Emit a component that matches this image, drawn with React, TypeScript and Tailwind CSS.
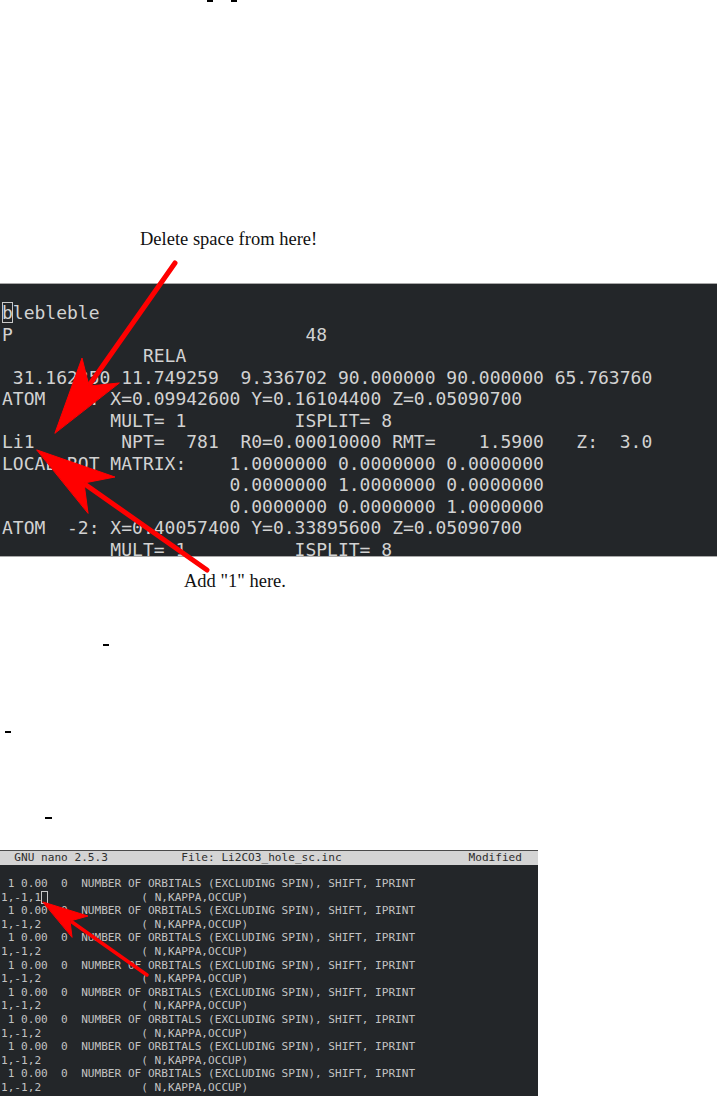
import React from "react";

const mono = { fontFamily: '"DejaVu Sans Mono", "Liberation Mono", monospace' };
const serif = { fontFamily: '"Liberation Serif", "DejaVu Serif", serif' };

const structLines = [
  "P" + " ".repeat(27) + "48",
  " ".repeat(13) + "RELA",
  " 31.162350 11.749259  9.336702 90.000000 90.000000 65.763760",
  "ATOM  -1: X=0.09942600 Y=0.16104400 Z=0.05090700",
  "          MULT= 1          ISPLIT= 8",
  "Li1        NPT=  781  R0=0.00010000 RMT=    1.5900   Z:  3.0",
  "LOCAL ROT MATRIX:    1.0000000 0.0000000 0.0000000",
  "                     0.0000000 1.0000000 0.0000000",
  "                     0.0000000 0.0000000 1.0000000",
  "ATOM  -2: X=0.40057400 Y=0.33895600 Z=0.05090700",
  "          MULT= 1          ISPLIT= 8",
];

const orbitalLine = " 1 0.00  0  NUMBER OF ORBITALS (EXCLUDING SPIN), SHIFT, IPRINT";
const kappaTail = " ".repeat(15) + "( N,KAPPA,OCCUP)";

const nanoHeader =
  "  GNU nano 2.5.3".padEnd(27, " ") +
  "File: Li2CO3_hole_sc.inc".padEnd(43, " ") +
  "Modified";

// red annotation arrows drawn over both screenshots
const Arrows = () => (
  <svg
    className="absolute inset-0 pointer-events-none"
    width={717}
    height={1096}
    viewBox="0 0 717 1096"
  >
    <g fill="#ff0000" stroke="#ff0000" strokeLinecap="round">
      <line x1={175} y1={263} x2={90} y2={384} strokeWidth={5} />
      <polygon points="55,433 82,358 89,386 119,383" strokeWidth={1} />

      <line x1={207} y1={570} x2={86} y2={485} strokeWidth={5} />
      <polygon points="37,450 115,477 84,483 88,513" strokeWidth={1} />

      <line x1={147} y1={975} x2={72} y2={922} strokeWidth={3.5} />
      <polygon points="43,902 88,916 70,921 72,937" strokeWidth={1} />
    </g>
  </svg>
);

export default function App() {
  return (
    <div className="relative w-[717px] h-[1096px] bg-white overflow-hidden flex flex-col">
      {/* clipped text remnants at the very top */}
      <div className="flex h-[2px]">
        <div className="ml-[207px] w-[6px] h-[2px] bg-black" />
        <div className="ml-[18px] w-[6px] h-[2px] bg-black" />
      </div>

      <div
        className="mt-[227px] h-[21px] pl-[140px] text-[18.5px] leading-[21px] text-[#111]"
        style={serif}
      >
        Delete space from here!
      </div>

      {/* struct file terminal */}
      <div
        className="mt-[33px] h-[274px] w-full overflow-hidden bg-[#232629] border-y border-[#a8a8a8] pt-[18px] pl-[2px] text-[18px] leading-[21.5px] text-[#d2d2d2] whitespace-pre"
        style={mono}
      >
        <div>
          <span className="outline outline-1 -outline-offset-1 outline-[#c8c8c8]">b</span>
          lebleble
        </div>
        {structLines.map((line, i) => (
          <div key={i}>{line}</div>
        ))}
      </div>

      <div
        className="mt-[14px] h-[21px] pl-[184px] text-[18.5px] leading-[21px] text-[#111]"
        style={serif}
      >
        Add "1" here.
      </div>

      <div className="mt-[52px] h-[2px]">
        <div className="ml-[103px] w-[6px] h-[2px] bg-black" />
      </div>
      <div className="mt-[85px] h-[2px]">
        <div className="ml-[5px] w-[6px] h-[2px] bg-black" />
      </div>
      <div className="mt-[84px] h-[2px]">
        <div className="ml-[45px] w-[7px] h-[2px] bg-black" />
      </div>

      {/* nano terminal */}
      <div
        className="mt-[31px] w-[538px] h-[246px] overflow-hidden bg-[#232629] border-t border-[#4a4a4a] text-[11.1px] whitespace-pre"
        style={mono}
      >
        <div className="h-[14px] bg-[#d4d4d4] pl-[1px] leading-[14px] text-[#2e2e2e]">
          {nanoHeader}
        </div>
        <div className="pt-[12px] pl-[1px] leading-[13.6px] text-[#c2c2c2]">
          {Array.from({ length: 8 }).map((_, i) => (
            <React.Fragment key={i}>
              <div>{orbitalLine}</div>
              {i === 0 ? (
                <div>
                  1,-1,1
                  <span className="outline outline-1 -outline-offset-1 outline-[#c8c8c8]">{" "}</span>
                  {kappaTail.slice(1)}
                </div>
              ) : (
                <div>{"1,-1,2" + kappaTail}</div>
              )}
            </React.Fragment>
          ))}
        </div>
      </div>

      <Arrows />
    </div>
  );
}
